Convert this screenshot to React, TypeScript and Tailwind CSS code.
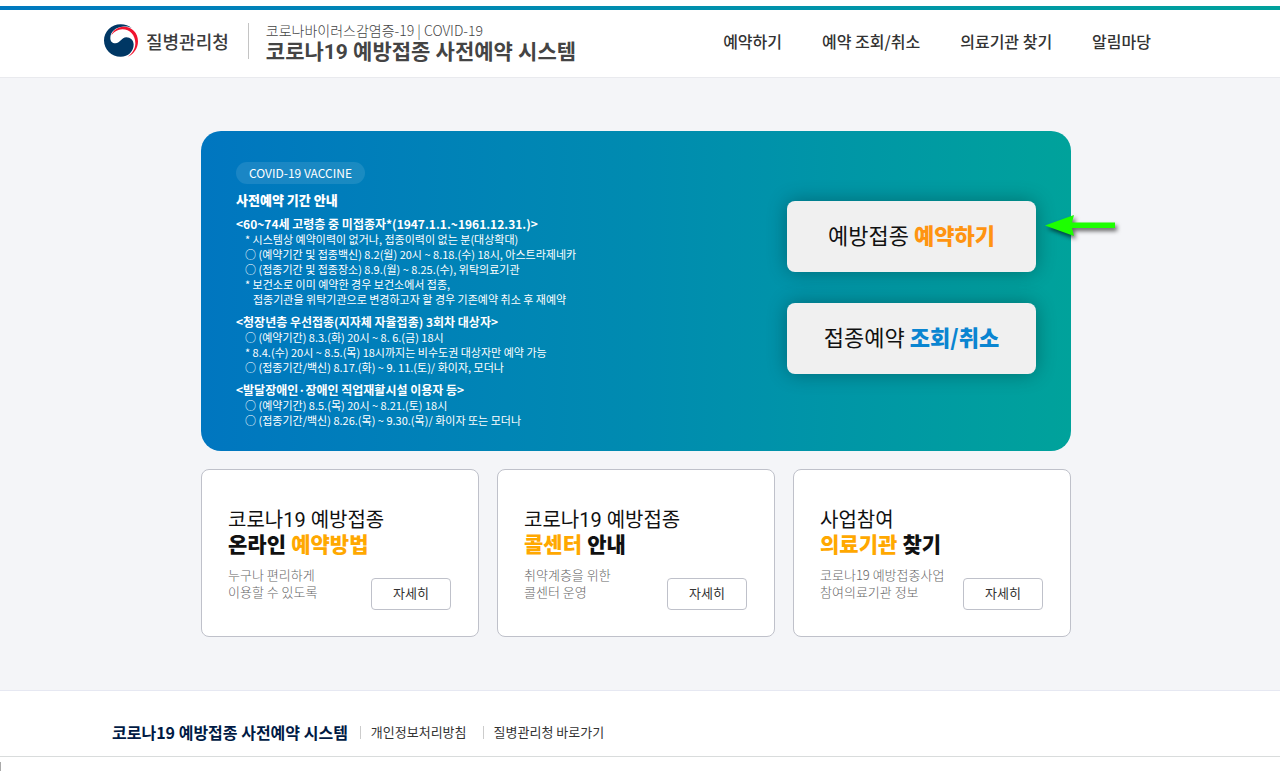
import clsx from "clsx";

const menus = ["예약하기", "예약 조회/취소", "의료기관 찾기", "알림마당"];

const notices = [
  {
    title: "<60~74세 고령층 중 미접종자*(1947.1.1.~1961.12.31.)>",
    lines: [
      {text: "* 시스템상 예약이력이 없거나, 접종이력이 없는 분(대상확대)"},
      {text: "○ (예약기간 및 접종백신) 8.2(월) 20시 ~ 8.18.(수) 18시, 아스트라제네카"},
      {text: "○ (접종기간 및 접종장소) 8.9.(월) ~ 8.25.(수), 위탁의료기관"},
      {text: "* 보건소로 이미 예약한 경우 보건소에서 접종,"},
      {text: "접종기관을 위탁기관으로 변경하고자 할 경우 기존예약 취소 후 재예약", indent: true},
    ],
  },
  {
    title: "<청장년층 우선접종(지자체 자율접종) 3회차 대상자>",
    lines: [
      {text: "○ (예약기간) 8.3.(화) 20시 ~ 8. 6.(금) 18시"},
      {text: "* 8.4.(수) 20시 ~ 8.5.(목) 18시까지는 비수도권 대상자만 예약 가능"},
      {text: "○ (접종기간/백신) 8.17.(화) ~ 9. 11.(토)/ 화이자, 모더나"},
    ],
  },
  {
    title: "<발달장애인·장애인 직업재활시설 이용자 등>",
    lines: [
      {text: "○ (예약기간) 8.5.(목) 20시 ~ 8.21.(토) 18시"},
      {text: "○ (접종기간/백신) 8.26.(목) ~ 9.30.(목)/ 화이자 또는 모더나"},
    ],
  },
];

const cards = [
  {
    top: "코로나19 예방접종",
    title: <>온라인 <span className="text-[#ffa800]">예약방법</span></>,
    desc: ["누구나 편리하게", "이용할 수 있도록"],
  },
  {
    top: "코로나19 예방접종",
    title: <><span className="text-[#ffa800]">콜센터</span> 안내</>,
    desc: ["취약계층을 위한", "콜센터 운영"],
  },
  {
    top: "사업참여",
    title: <><span className="text-[#ffa800]">의료기관</span> 찾기</>,
    desc: ["코로나19 예방접종사업", "참여의료기관 정보"],
  },
];

function Logo() {
  return (
    <svg viewBox="0 0 102 98" className="h-[33px] w-[34px]" aria-hidden="true">
      <path
        fill="#003764"
        d="M84 12C75 4 63 0 50 0C22 0 0 22 0 49C0 76 22 98 50 98C73 98 89 81 89 61C89 48 79 39 67 39C52 39 49 57 34 57C25 57 19 51 19 42C19 24 34 10 54 8C66 6 76 7 84 12Z"
      />
      <path
        fill="#f0142f"
        d="M22 33C28 18 41 9 58 8C83 7 102 26 102 51C102 72 90 89 71 98C85 87 94 74 94 57C94 33 78 15 55 15C41 15 30 22 22 33Z"
      />
    </svg>
  );
}

function Header() {
  return (
    <header className="border-b border-[#e9eaee] bg-white pt-1.5 pr-2 pb-1.5">
      <div className="-mr-2 h-1 bg-linear-to-r from-[#0079bf] to-[#00a19c]" />
      <div className="mx-auto flex h-[61px] max-w-[1064px] items-center justify-between">
        <div className="flex items-center">
          <a href="#kdca" className="flex items-center gap-2 text-lg font-medium text-[#3c3c3c]">
            <Logo />
            질병관리청
          </a>
          <a href="#home" className="ml-[19px] flex items-center gap-[17px] text-[#444]">
            <span className="h-9 w-px bg-[#c4c4c4]" />
            <span className="pt-0.5">
              <span className="block text-sm leading-5 font-light">코로나바이러스감염증-19 | COVID-19</span>
              <strong className="block font-[Roboto,'Noto_Sans_CJK_KR',sans-serif] text-[21px] leading-6 font-bold">
                코로나19 예방접종 사전예약 시스템
              </strong>
            </span>
          </a>
        </div>
        <nav className="mr-[17px]">
          <ul className="flex gap-10 text-base font-medium text-[#333]">
            {menus.map((menu) => (
              <li key={menu}>
                <a href="#menu">{menu}</a>
              </li>
            ))}
          </ul>
        </nav>
      </div>
    </header>
  );
}

function Arrow() {
  return (
    <svg
      viewBox="0 0 76 28"
      className="absolute top-[82px] -right-[50px] h-7 w-19 drop-shadow-[2px_3px_2px_rgba(0,0,0,0.6)]"
      aria-hidden="true"
    >
      <path fill="#1dff00" d="M0 12.5L29 2L27 9.5H70V15H27L29 23Z" />
    </svg>
  );
}

function Hero() {
  return (
    <section className="relative flex min-h-80 justify-between rounded-[20px] bg-linear-to-r from-[#0076c0] via-[#008bb0] to-[#00a29b] px-[35px] pt-7">
      <div className="text-white">
        <span className="inline-block rounded-full bg-white/10 px-[13px] text-[12px] leading-[22px]">COVID-19 VACCINE</span>
        <h2 className="mt-1 mb-1 text-[13px] leading-6 font-black">사전예약 기간 안내</h2>
        <div className="flex flex-col gap-[7px]">
          {notices.map((notice) => (
            <div key={notice.title}>
              <h3 className="text-[12px] leading-4 font-bold">{notice.title}</h3>
              <ul className="pl-[9px] text-[11px] leading-[15px]">
                {notice.lines.map((line) => (
                  <li key={line.text} className={clsx(line.indent && "pl-2")}>{line.text}</li>
                ))}
              </ul>
            </div>
          ))}
        </div>
      </div>
      <div className="flex w-[249px] flex-col gap-[31px] pt-[42px] text-[22px] text-[#111]">
        <button type="button" className="h-[71px] rounded-lg bg-[#f0f0f0] pb-1 shadow-[0_0_20px_rgba(0,0,0,0.3)]">
          예방접종 <strong className="font-black text-[#ff9411]">예약하기</strong>
        </button>
        <button type="button" className="h-[71px] rounded-lg bg-[#f0f0f0] pb-1 shadow-[0_0_20px_rgba(0,0,0,0.3)]">
          접종예약 <strong className="font-black text-[#0a85d1]">조회/취소</strong>
        </button>
      </div>
      <Arrow />
    </section>
  );
}

function Cards() {
  return (
    <section className="mt-[18px] grid grid-cols-3 gap-[18px]">
      {cards.map((card, i) => (
        <article key={i} className="rounded-lg border border-[#bfc1ca] bg-white pt-[38px] pr-[27px] pb-[26px] pl-[26px] text-[#111]">
          <h3 className="font-[Roboto,'Noto_Sans_CJK_KR',sans-serif] text-[20px] leading-[25px]">
            {card.top}
            <strong className="block text-[21px] font-black">{card.title}</strong>
          </h3>
          <div className="flex justify-between">
            <p className="pt-2 text-[13px] leading-[17px] font-light text-[#666]">
              {card.desc[0]}
              <br />
              {card.desc[1]}
            </p>
            <button type="button" className="mt-5 h-8 w-20 rounded-sm border border-[#bfc1ca] pb-0.5 text-[13px] text-[#333]">
              자세히
            </button>
          </div>
        </article>
      ))}
    </section>
  );
}

function Footer() {
  return (
    <footer className="border-t border-[#e6e8f2] bg-white">
      <div className="border-b border-[#d9dcdc] pt-[29px] pr-2 pb-3">
        <div className="mx-auto flex max-w-[1064px] items-center pl-2 text-[13px] text-[#333]">
          <strong className="text-base font-bold text-[#001a44]">코로나19 예방접종 사전예약 시스템</strong>
          <span className="mr-[10px] ml-3 h-[13px] w-px bg-[#ccc]" />
          <a href="#privacy">개인정보처리방침</a>
          <span className="mr-[10px] ml-4 h-[13px] w-px bg-[#ccc]" />
          <a href="#kdca">질병관리청 바로가기</a>
        </div>
      </div>
      <div className="mt-[5px] h-[9px] border-l border-[#aaa]" />
    </footer>
  );
}

export default function App() {
  return (
    <div className="bg-white font-['Noto_Sans_CJK_KR',sans-serif]">
      <Header />
      <main className="bg-[#f4f5f8] pt-[53px] pr-2 pb-[53px]">
        <div className="mx-auto max-w-[870px]">
          <Hero />
          <Cards />
        </div>
      </main>
      <Footer />
    </div>
  );
}
